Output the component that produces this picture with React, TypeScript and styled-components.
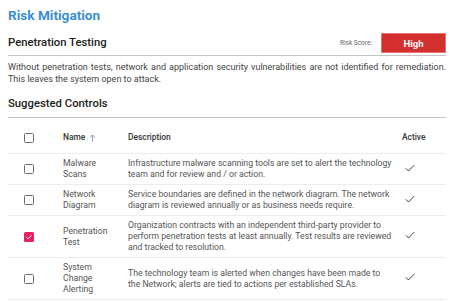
import React from 'react';
import styled, { createGlobalStyle } from 'styled-components';

const GlobalStyle = createGlobalStyle`
  body {
    margin: 0;
    background: #fff;
    font-family: Roboto, "Liberation Sans", sans-serif;
  }
`;

const Page = styled.div`
  padding: 0 8px;
  width: 438px;
`;

const Title = styled.h1`
  margin: 0;
  padding-top: 6px;
  font-size: 13.6px;
  line-height: 18px;
  font-weight: 700;
  color: #3a8fd0;
`;

const SectionHeader = styled.div`
  display: flex;
  justify-content: space-between;
  align-items: flex-end;
  border-bottom: 1px solid #c4c4c4;
  margin-top: 9px;
  padding-bottom: 2px;
`;

const SectionTitle = styled.h2`
  margin: 0 0 2px;
  font-size: 11.3px;
  line-height: 16px;
  font-weight: 500;
  color: #222;
`;

const Score = styled.div`
  display: flex;
  align-items: center;
  gap: 9px;
`;

const ScoreLabel = styled.span`
  font-size: 6.5px;
  color: #666;
`;

const ScoreBadge = styled.div`
  width: 63px;
  height: 18px;
  background: #d32f2f;
  border: 1px solid #e57373;
  color: #fff;
  font-size: 9.5px;
  font-weight: 700;
  display: flex;
  align-items: center;
  justify-content: center;
`;

const Paragraph = styled.p`
  margin: 5px 0 0;
  font-size: 9px;
  line-height: 12px;
  color: #444;
  text-align: justify;
`;

const FullLine = styled.span`
  display: block;
  text-align-last: justify;
`;

const Subtitle = styled(SectionTitle)`
  margin: 0;
  padding: 11px 0 5px;
  border-bottom: 1px solid #c4c4c4;
`;

const Table = styled.table`
  width: 100%;
  border-collapse: collapse;
  margin-top: 8px;
  table-layout: fixed;
`;

const Th = styled.th<{ $w?: number }>`
  box-sizing: border-box;
  width: ${({ $w }) => ($w ? `${$w}px` : 'auto')};
  text-align: left;
  font-size: 8.4px;
  line-height: 11px;
  font-weight: 500;
  color: #333;
  padding: 6px 8px 10px;
  border-bottom: 1px solid #ececec;
`;

const Td = styled.td`
  font-size: 8.7px;
  line-height: 11px;
  color: #555;
  padding: 4px 8px;
  vertical-align: middle;
  border-bottom: 1px solid #ececec;
`;

const DescCell = styled(Td)`
  padding-right: 2px;
`;

const BoxCell = styled(Td)`
  padding-left: 16px;
`;

const BoxHead = styled(Th)`
  padding-left: 16px;
`;

const Box = styled.div<{ $checked?: boolean }>`
  width: 10px;
  height: 10px;
  box-sizing: border-box;
  border-radius: 1.5px;
  border: ${({ $checked }) => ($checked ? 'none' : '1.4px solid #6b6b6b')};
  background: ${({ $checked }) => ($checked ? '#e91e63' : '#fff')};
  display: flex;
  align-items: center;
  justify-content: center;
`;

const NameHead = styled.span`
  display: inline-flex;
  align-items: center;
  gap: 4px;
`;

const ActiveHead = styled(Th)`
  padding-left: 6px;
  padding-right: 4px;
`;

const ActiveCell = styled(Td)`
  padding-left: 9px;
  padding-right: 4px;
`;

const CheckBox = ({ checked }: { checked?: boolean }) => (
  <Box $checked={checked}>
    {checked && (
      <svg width="8" height="8" viewBox="0 0 24 24">
        <path d="M4 12.5l5 5L20 7" fill="none" stroke="#fff" strokeWidth="3" />
      </svg>
    )}
  </Box>
);

const SortUp = () => (
  <svg width="7" height="8" viewBox="0 0 14 16">
    <path d="M7 15V2M1.5 7.5L7 2l5.5 5.5" fill="none" stroke="#777" strokeWidth="1.4" />
  </svg>
);

const Tick = () => (
  <svg width="10" height="8" viewBox="0 0 20 16">
    <path d="M1.5 8.5l5.5 5.5L18.5 2" fill="none" stroke="#222" strokeWidth="1.7" />
  </svg>
);

const controls = [
  {
    name: 'Malware Scans',
    description:
      'Infrastructure malware scanning tools are set to alert the technology team and for review and / or action.',
    checked: false,
  },
  {
    name: 'Network Diagram',
    description:
      'Service boundaries are defined in the network diagram. The network diagram is reviewed annually or as business needs require.',
    checked: false,
  },
  {
    name: 'Penetration Test',
    description:
      'Organization contracts with an independent third-party provider to perform penetration tests at least annually. Test results are reviewed and tracked to resolution.',
    checked: true,
  },
  {
    name: 'System Change Alerting',
    description:
      'The technology team is alerted when changes have been made to the Network; alerts are tied to actions per established SLAs.',
    checked: false,
  },
];

const App = () => (
  <Page>
    <GlobalStyle />
    <Title>Risk Mitigation</Title>
    <SectionHeader>
      <SectionTitle>Penetration Testing</SectionTitle>
      <Score>
        <ScoreLabel>Risk Score:</ScoreLabel>
        <ScoreBadge>High</ScoreBadge>
      </Score>
    </SectionHeader>
    <Paragraph>
      <FullLine>
        Without penetration tests, network and application security vulnerabilities are not identified for remediation.
      </FullLine>
      This leaves the system open to attack.
    </Paragraph>
    <Subtitle>Suggested Controls</Subtitle>
    <Table>
      <thead>
        <tr>
          <BoxHead $w={47}>
            <CheckBox />
          </BoxHead>
          <Th $w={65}>
            <NameHead>
              Name
              <SortUp />
            </NameHead>
          </Th>
          <Th>Description</Th>
          <ActiveHead $w={50}>Active</ActiveHead>
        </tr>
      </thead>
      <tbody>
        {controls.map((c) => (
          <tr key={c.name}>
            <BoxCell>
              <CheckBox checked={c.checked} />
            </BoxCell>
            <Td>{c.name}</Td>
            <DescCell>{c.description}</DescCell>
            <ActiveCell>
              <Tick />
            </ActiveCell>
          </tr>
        ))}
      </tbody>
    </Table>
  </Page>
);

export default App;
